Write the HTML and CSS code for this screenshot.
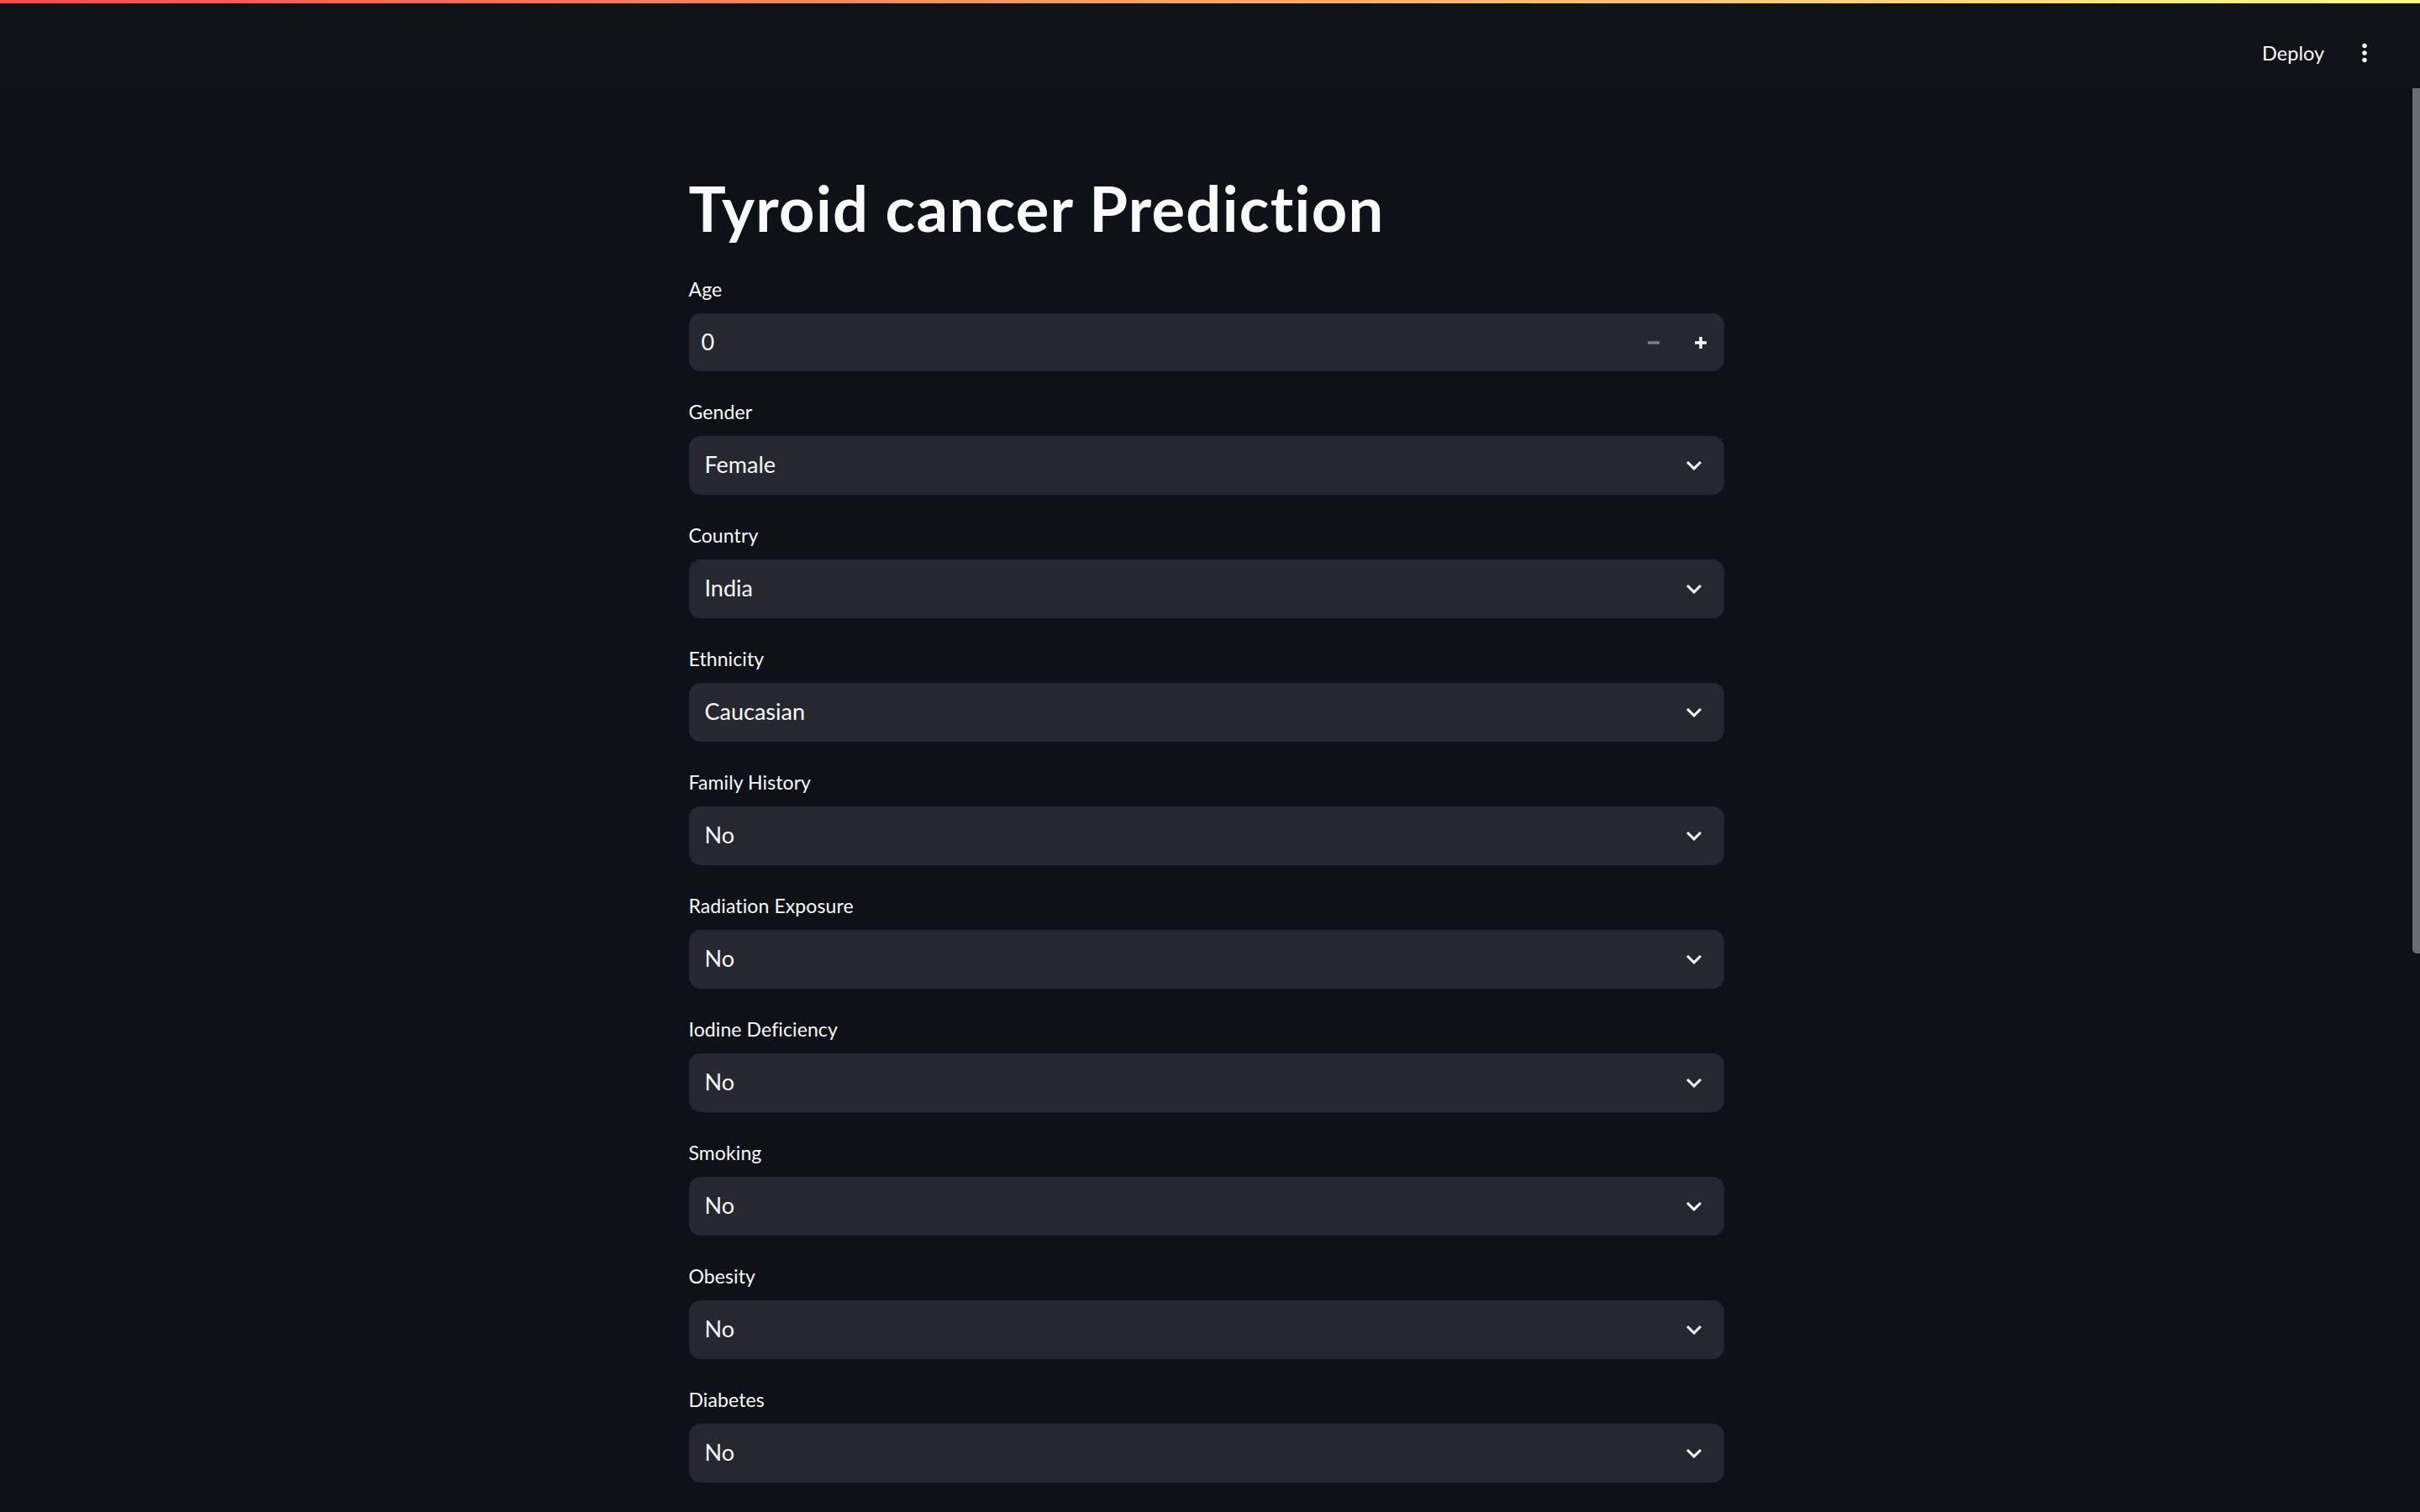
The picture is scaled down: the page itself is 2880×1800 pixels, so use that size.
FILE: index.html
```html
<!DOCTYPE html>
<html lang="en">
<head>
<meta charset="utf-8">
<title>Tyroid cancer Prediction</title>
<link rel="stylesheet" href="styles.css">
</head>
<body>
<div class="app">
  <header class="header">
    <div class="decoration"></div>
    <span class="deploy">Deploy</span>
    <span class="menu">
      <svg viewBox="0 0 24 24" width="34" height="34"><path fill="#fafafa" d="M12 8c1.1 0 2-.9 2-2s-.9-2-2-2-2 .9-2 2 .9 2 2 2zm0 2c-1.1 0-2 .9-2 2s.9 2 2 2 2-.9 2-2-.9-2-2-2zm0 6c-1.1 0-2 .9-2 2s.9 2 2 2 2-.9 2-2-.9-2-2-2z"/></svg>
    </span>
  </header>
  <main class="main">
    <div class="scroll-thumb"></div>
    <div class="block">
      <h1 class="title">Tyroid cancer Prediction</h1>

      <div class="field">
        <label class="label">Age</label>
        <div class="number">
          <div class="number-value">0</div>
          <div class="step step-disabled"><svg viewBox="0 0 8 8" width="14" height="14"><path fill="currentColor" d="M0 3v2h8V3H0z"/></svg></div>
          <div class="step"><svg viewBox="0 0 8 8" width="14" height="14"><path fill="currentColor" d="M3 0v3H0v2h3v3h2V5h3V3H5V0H3z"/></svg></div>
        </div>
      </div>

      <div class="field">
        <label class="label">Gender</label>
        <div class="select"><span class="select-value">Female</span><svg class="chev" viewBox="0 0 24 24" width="36" height="36"><path fill="#fafafa" d="M16.59 8.59L12 13.17 7.41 8.59 6 10l6 6 6-6z"/></svg></div>
      </div>

      <div class="field">
        <label class="label">Country</label>
        <div class="select"><span class="select-value">India</span><svg class="chev" viewBox="0 0 24 24" width="36" height="36"><path fill="#fafafa" d="M16.59 8.59L12 13.17 7.41 8.59 6 10l6 6 6-6z"/></svg></div>
      </div>

      <div class="field">
        <label class="label">Ethnicity</label>
        <div class="select"><span class="select-value">Caucasian</span><svg class="chev" viewBox="0 0 24 24" width="36" height="36"><path fill="#fafafa" d="M16.59 8.59L12 13.17 7.41 8.59 6 10l6 6 6-6z"/></svg></div>
      </div>

      <div class="field">
        <label class="label">Family History</label>
        <div class="select"><span class="select-value">No</span><svg class="chev" viewBox="0 0 24 24" width="36" height="36"><path fill="#fafafa" d="M16.59 8.59L12 13.17 7.41 8.59 6 10l6 6 6-6z"/></svg></div>
      </div>

      <div class="field">
        <label class="label">Radiation Exposure</label>
        <div class="select"><span class="select-value">No</span><svg class="chev" viewBox="0 0 24 24" width="36" height="36"><path fill="#fafafa" d="M16.59 8.59L12 13.17 7.41 8.59 6 10l6 6 6-6z"/></svg></div>
      </div>

      <div class="field">
        <label class="label">Iodine Deficiency</label>
        <div class="select"><span class="select-value">No</span><svg class="chev" viewBox="0 0 24 24" width="36" height="36"><path fill="#fafafa" d="M16.59 8.59L12 13.17 7.41 8.59 6 10l6 6 6-6z"/></svg></div>
      </div>

      <div class="field">
        <label class="label">Smoking</label>
        <div class="select"><span class="select-value">No</span><svg class="chev" viewBox="0 0 24 24" width="36" height="36"><path fill="#fafafa" d="M16.59 8.59L12 13.17 7.41 8.59 6 10l6 6 6-6z"/></svg></div>
      </div>

      <div class="field">
        <label class="label">Obesity</label>
        <div class="select"><span class="select-value">No</span><svg class="chev" viewBox="0 0 24 24" width="36" height="36"><path fill="#fafafa" d="M16.59 8.59L12 13.17 7.41 8.59 6 10l6 6 6-6z"/></svg></div>
      </div>

      <div class="field">
        <label class="label">Diabetes</label>
        <div class="select"><span class="select-value">No</span><svg class="chev" viewBox="0 0 24 24" width="36" height="36"><path fill="#fafafa" d="M16.59 8.59L12 13.17 7.41 8.59 6 10l6 6 6-6z"/></svg></div>
      </div>
    </div>
  </main>
</div>
</body>
</html>
```
FILE: styles.css
```css
* { box-sizing: border-box; }
html, body { margin: 0; height: 100%; }
body {
  background: #0e1117;
  color: #fafafa;
  font-family: "Lato", "Noto Sans", sans-serif;
  overflow: hidden;
}
.app {
  height: 1800px;
  display: flex;
  flex-direction: column;
}
.header {
  position: relative;
  flex: none;
  height: 105px;
  background: #111217;
  display: flex;
  align-items: center;
  justify-content: flex-end;
  padding: 21px 49px 0 0;
}
.decoration {
  position: absolute;
  top: 0;
  left: 0;
  right: 0;
  height: 4px;
  background: linear-gradient(90deg, #ff4b4b, #fffd80);
}
.deploy {
  font-size: 23.5px;
  color: #fafafa;
  margin-right: 31px;
}
.menu { display: flex; }

.main {
  position: relative;
  flex: 1;
  overflow: hidden;
  padding-right: 9px;
}
.scroll-thumb {
  position: absolute;
  top: 0;
  right: 0;
  width: 9px;
  height: 1030px;
  background: #6c6d72;
  border-radius: 0 0 0 5px;
}

.block {
  width: 1232px;
  margin: 0 auto;
  padding: 97px 0 0;
  display: flex;
  flex-direction: column;
  gap: 28px;
}
.title {
  margin: 0 0 2px;
  font-size: 74px;
  font-weight: 700;
  line-height: 92px;
  letter-spacing: 1.3px;
  color: #fafafa;
}
.field {
  display: flex;
  flex-direction: column;
}
.label {
  display: block;
  height: 42px;
  line-height: 40px;
  margin-bottom: 7px;
  font-size: 23px;
  letter-spacing: 0.1px;
  color: #fafafa;
}
.select {
  height: 70px;
  background: #262730;
  border-radius: 14px;
  display: flex;
  align-items: center;
  justify-content: space-between;
  padding: 0 18px 0 19px;
}
.select-value { font-size: 27px; margin-bottom: 3px; }
.chev { display: block; }

.number {
  height: 69px;
  background: #262730;
  border-radius: 14px;
  display: flex;
  align-items: center;
}
.number-value {
  flex: 1;
  padding-left: 15px;
  margin-bottom: 3px;
  font-size: 27px;
}
.step {
  width: 56px;
  height: 100%;
  display: flex;
  align-items: center;
  justify-content: center;
  color: #fafafa;
}
.step svg { display: block; }
.step-disabled { color: #7b7b81; }
```
